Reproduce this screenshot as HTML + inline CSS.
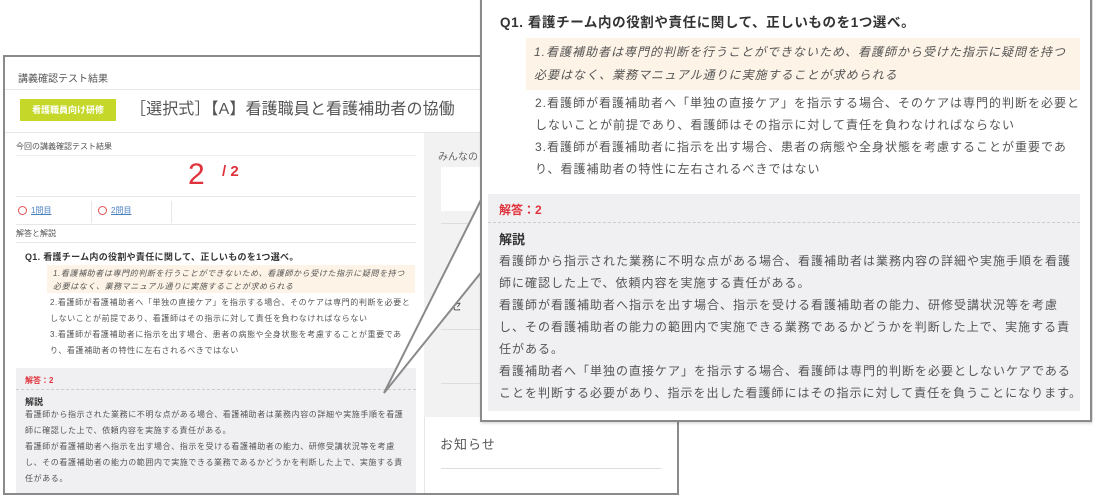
<!DOCTYPE html>
<html><head><meta charset="utf-8"><style>
*{margin:0;padding:0;box-sizing:border-box}
body{width:1093px;height:486px;overflow:hidden;background:#fff;position:relative;font-family:"Liberation Sans","Noto Sans CJK JP",sans-serif;color:#444}
.a{position:absolute;white-space:nowrap}
.frame{position:absolute;left:3px;top:55px;width:676px;height:440px;border:2px solid #8a8a8a;background:#fff;overflow:hidden}
.s{font-size:8px;letter-spacing:.6px;color:#555}
.p{font-size:12px;letter-spacing:1px;color:#555}
</style></head><body>
<div class="frame">
 <div class="a" style="left:13px;top:13px;font-size:10px;color:#555">講義確認テスト結果</div>
 <div class="a" style="left:0;top:32px;width:680px;border-top:1px solid #e6e6e6"></div>
 <div class="a" style="left:15px;top:42px;width:96px;height:22px;background:#c5d82a;color:#fff;font-size:9px;font-weight:bold;line-height:22px;text-align:center">看護職員向け研修</div>
 <div class="a" style="left:125px;top:42px;font-size:16px;color:#555;letter-spacing:.1px;line-height:22px">［選択式］【A】看護職員と看護補助者の協働</div>
 <div class="a" style="left:0;top:75px;width:680px;border-top:1px solid #e6e6e6"></div>
 <div class="a" style="left:419px;top:76px;width:260px;height:290px;background:#f2f2f3"></div>
 <div class="a" style="left:419px;top:360px;width:260px;height:100px;background:#fff;border-left:1px solid #e6e6e6"></div>
 <div class="a" style="left:433px;top:91px;font-size:10px;color:#666">みんなの</div>
 <div class="a" style="left:436px;top:110px;width:240px;height:44px;background:#fff"></div>
 <div class="a" style="left:436px;top:166px;width:240px;border-top:1px solid #ddd"></div>
 <div class="a" style="left:436px;top:220px;width:240px;border-top:1px solid #ddd"></div>
 <div class="a" style="left:436px;top:272px;width:240px;border-top:1px solid #ddd"></div>
 <div class="a" style="left:436px;top:326px;width:240px;border-top:1px solid #ddd"></div>
 <div class="a" style="left:433px;top:240px;font-size:12px;color:#555">ッセ</div>
 <div class="a" style="left:435px;top:377px;font-size:13px;color:#555;letter-spacing:1px">お知らせ</div>
 <div class="a" style="left:436px;top:411px;width:220px;border-top:1px solid #ddd"></div>
 <div class="a" style="left:11px;top:84px;font-size:8px;color:#555">今回の講義確認テスト結果</div>
 <div class="a" style="left:11px;top:98px;width:400px;border-top:1px solid #eee"></div>
 <div class="a" style="left:183px;top:98px;font-size:30px;color:#e0323c;line-height:40px">2</div>
 <div class="a" style="left:217px;top:106px;font-size:15px;color:#e0323c;font-weight:bold">/ 2</div>
 <div class="a" style="left:11px;top:139px;width:400px;border-top:1px solid #e6e6e6"></div>
 <div class="a" style="left:13px;top:149px;width:9px;height:9px;border:1.5px solid #e05050;border-radius:50%"></div>
 <div class="a" style="left:26px;top:148px;font-size:8px;color:#4a7fc0;text-decoration:underline">1問目</div>
 <div class="a" style="left:86px;top:144px;height:22px;border-left:1px solid #e6e6e6"></div>
 <div class="a" style="left:93px;top:149px;width:9px;height:9px;border:1.5px solid #e05050;border-radius:50%"></div>
 <div class="a" style="left:106px;top:148px;font-size:8px;color:#4a7fc0;text-decoration:underline">2問目</div>
 <div class="a" style="left:166px;top:144px;height:22px;border-left:1px solid #e6e6e6"></div>
 <div class="a" style="left:11px;top:167px;width:400px;border-top:1px solid #e6e6e6"></div>
 <div class="a" style="left:11px;top:171px;font-size:8px;color:#555">解答と解説</div>
 <div class="a" style="left:11px;top:185px;width:400px;border-top:1px solid #e6e6e6"></div>
 <div class="a" style="left:20px;top:193px;font-size:9px;font-weight:bold;color:#333;letter-spacing:.3px">Q1. 看護チーム内の役割や責任に関して、正しいものを1つ選べ。</div>
 <div class="a s" style="left:42px;top:208px;width:368px;height:28px;background:#fdf3e6;padding:2px 0 0 6px;font-style:italic;line-height:13px">1.看護補助者は専門的判断を行うことができないため、看護師から受けた指示に疑問を持つ<br>必要はなく、業務マニュアル通りに実施することが求められる</div>
 <div class="a s" style="left:45px;top:238px;line-height:16px">2.看護師が看護補助者へ「単独の直接ケア」を指示する場合、そのケアは専門的判断を必要と<br>しないことが前提であり、看護師はその指示に対して責任を負わなければならない<br>3.看護師が看護補助者に指示を出す場合、患者の病態や全身状態を考慮することが重要であ<br>り、看護補助者の特性に左右されるべきではない</div>
 <div class="a" style="left:11px;top:311px;width:400px;height:140px;background:#f0f0f2"></div>
 <div class="a" style="left:20px;top:318px;font-size:8px;color:#e0323c;font-weight:bold">解答：2</div>
 <div class="a" style="left:11px;top:332px;width:400px;border-top:1px dashed #ccc"></div>
 <div class="a" style="left:20px;top:338px;font-size:9px;color:#333;font-weight:bold">解説</div>
 <div class="a s" style="left:20px;top:350px;line-height:16px">看護師から指示された業務に不明な点がある場合、看護補助者は業務内容の詳細や実施手順を看護<br>師に確認した上で、依頼内容を実施する責任がある。<br>看護師が看護補助者へ指示を出す場合、指示を受ける看護補助者の能力、研修受講状況等を考慮<br>し、その看護補助者の能力の範囲内で実施できる業務であるかどうかを判断した上で、実施する責<br>任がある。</div>
</div>
<svg class="a" style="left:0;top:0" width="1093" height="486">
 <polygon points="384,393 483,196 483,270" fill="#fff" stroke="none"/>
 <line x1="384" y1="393" x2="483" y2="196" stroke="#8a8a8a" stroke-width="2"/>
 <line x1="384" y1="393" x2="483" y2="270" stroke="#8a8a8a" stroke-width="2"/>
</svg>
<div class="a" style="left:480px;top:-4px;width:612px;height:426px;border:2px solid #8a8a8a;background:#fff;box-shadow:1px 1px 3px rgba(0,0,0,.2)">
 <div class="a" style="left:18px;top:13px;font-size:13.5px;font-weight:bold;color:#333;letter-spacing:.6px">Q1. 看護チーム内の役割や責任に関して、正しいものを1つ選べ。</div>
 <div class="a p" style="left:44px;top:40px;width:554px;height:52px;background:#fdf3e6;padding:3px 0 0 8px;font-style:italic;line-height:23px">1.看護補助者は専門的判断を行うことができないため、看護師から受けた指示に疑問を持つ<br>必要はなく、業務マニュアル通りに実施することが求められる</div>
 <div class="a p" style="left:53px;top:94px;line-height:22px">2.看護師が看護補助者へ「単独の直接ケア」を指示する場合、そのケアは専門的判断を必要と<br>しないことが前提であり、看護師はその指示に対して責任を負わなければならない<br>3.看護師が看護補助者に指示を出す場合、患者の病態や全身状態を考慮することが重要であ<br>り、看護補助者の特性に左右されるべきではない</div>
 <div class="a" style="left:6px;top:196px;width:592px;height:217px;background:#f0f0f2"></div>
 <div class="a" style="left:17px;top:203px;font-size:12px;color:#e0323c;font-weight:bold">解答：2</div>
 <div class="a" style="left:6px;top:224px;width:592px;border-top:1px dashed #ccc"></div>
 <div class="a" style="left:17px;top:231px;font-size:13px;color:#333;font-weight:bold">解説</div>
 <div class="a p" style="left:17px;top:252px;line-height:22px">看護師から指示された業務に不明な点がある場合、看護補助者は業務内容の詳細や実施手順を看護<br>師に確認した上で、依頼内容を実施する責任がある。<br>看護師が看護補助者へ指示を出す場合、指示を受ける看護補助者の能力、研修受講状況等を考慮<br>し、その看護補助者の能力の範囲内で実施できる業務であるかどうかを判断した上で、実施する責<br>任がある。<br>看護補助者へ「単独の直接ケア」を指示する場合、看護師は専門的判断を必要としないケアである<br>ことを判断する必要があり、指示を出した看護師にはその指示に対して責任を負うことになります。</div>
</div>
</body></html>
